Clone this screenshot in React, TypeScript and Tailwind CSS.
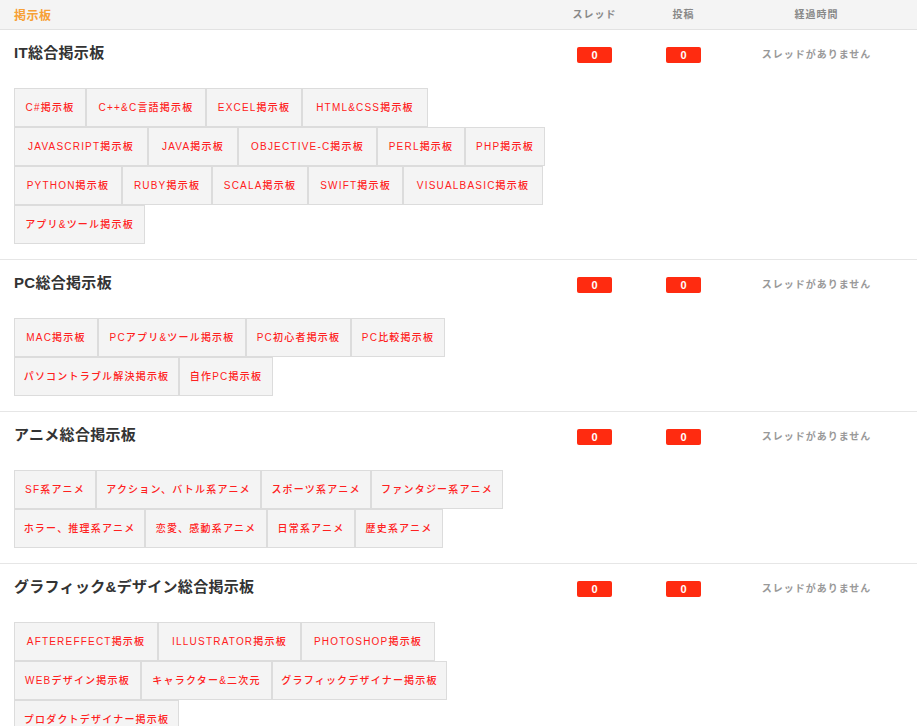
import React from 'react';

interface Tag {
  label: string;
  w: string;
}

interface Board {
  title: string;
  threads: number;
  posts: number;
  tags: Tag[];
}

const BOARDS: Board[] = [
  {
    title: 'IT総合掲示板',
    threads: 0,
    posts: 0,
    tags: [
      { label: 'C#掲示板', w: 'w-[72px]' },
      { label: 'C++&C言語掲示板', w: 'w-[120px]' },
      { label: 'EXCEL掲示板', w: 'w-[96px]' },
      { label: 'HTML&CSS掲示板', w: 'w-[126px]' },
      { label: 'JAVASCRIPT掲示板', w: 'w-[134px]' },
      { label: 'JAVA掲示板', w: 'w-[90px]' },
      { label: 'OBJECTIVE-C掲示板', w: 'w-[139px]' },
      { label: 'PERL掲示板', w: 'w-[88px]' },
      { label: 'PHP掲示板', w: 'w-[80px]' },
      { label: 'PYTHON掲示板', w: 'w-[108px]' },
      { label: 'RUBY掲示板', w: 'w-[90px]' },
      { label: 'SCALA掲示板', w: 'w-[96px]' },
      { label: 'SWIFT掲示板', w: 'w-[95px]' },
      { label: 'VISUALBASIC掲示板', w: 'w-[140px]' },
      { label: 'アプリ&ツール掲示板', w: 'w-[131px]' },
    ],
  },
  {
    title: 'PC総合掲示板',
    threads: 0,
    posts: 0,
    tags: [
      { label: 'MAC掲示板', w: 'w-[84px]' },
      { label: 'PCアプリ&ツール掲示板', w: 'w-[148px]' },
      { label: 'PC初心者掲示板', w: 'w-[105px]' },
      { label: 'PC比較掲示板', w: 'w-[94px]' },
      { label: 'パソコントラブル解決掲示板', w: 'w-[165px]' },
      { label: '自作PC掲示板', w: 'w-[94px]' },
    ],
  },
  {
    title: 'アニメ総合掲示板',
    threads: 0,
    posts: 0,
    tags: [
      { label: 'SF系アニメ', w: 'w-[82px]' },
      { label: 'アクション、バトル系アニメ', w: 'w-[165px]' },
      { label: 'スポーツ系アニメ', w: 'w-[110px]' },
      { label: 'ファンタジー系アニメ', w: 'w-[132px]' },
      { label: 'ホラー、推理系アニメ', w: 'w-[131px]' },
      { label: '恋愛、感動系アニメ', w: 'w-[122px]' },
      { label: '日常系アニメ', w: 'w-[88px]' },
      { label: '歴史系アニメ', w: 'w-[88px]' },
    ],
  },
  {
    title: 'グラフィック&デザイン総合掲示板',
    threads: 0,
    posts: 0,
    tags: [
      { label: 'AFTEREFFECT掲示板', w: 'w-[144px]' },
      { label: 'ILLUSTRATOR掲示板', w: 'w-[143px]' },
      { label: 'PHOTOSHOP掲示板', w: 'w-[134px]' },
      { label: 'WEBデザイン掲示板', w: 'w-[127px]' },
      { label: 'キャラクター&二次元', w: 'w-[131px]' },
      { label: 'グラフィックデザイナー掲示板', w: 'w-[175px]' },
      { label: 'プロダクトデザイナー掲示板', w: 'w-[165px]' },
    ],
  },
];

const FONT = "font-['Liberation_Sans','Noto_Sans_CJK_JP',sans-serif]";

const CountBadge: React.FC<{ value: number }> = ({ value }) => (
  <span className="flex items-center justify-center w-[35px] h-4 rounded-[2px] bg-[#ff2b10] text-white text-[11px] font-bold leading-none">
    {value}
  </span>
);

const BoardSection: React.FC<{ board: Board }> = ({ board }) => (
  <section className="flex border-b border-[#e6e6e6]">
    <div className="w-[550px] pl-[14px] pt-[13px] pb-[15px]">
      <h2 className="text-[15px] leading-5 font-bold text-[#333] tracking-[0.3px]">{board.title}</h2>
      <div className="mt-[25px] flex flex-wrap w-[536px]">
        {board.tags.map(tag => (
          <a
            key={tag.label}
            href="#"
            className={`${tag.w} h-[39px] flex items-center justify-center border border-[#dcdcdc] bg-[#f4f4f4] text-[10px] font-medium tracking-[1.2px] text-[#ff2020] whitespace-nowrap`}
          >
            {tag.label}
          </a>
        ))}
      </div>
    </div>
    <div className="w-[89px] flex justify-center pt-[17px]">
      <CountBadge value={board.threads} />
    </div>
    <div className="w-[89px] flex justify-center pt-[17px]">
      <CountBadge value={board.posts} />
    </div>
    <div className="w-[177px] flex justify-center pt-[17px]">
      <span className="text-[10px] leading-4 font-semibold tracking-[1px] text-[#999]">
        スレッドがありません
      </span>
    </div>
  </section>
);

export default function App() {
  return (
    <div className={`${FONT} bg-white w-[917px] h-[726px] overflow-hidden`}>
      <header className="flex items-center h-[30px] bg-[#f4f4f4] border-b border-[#e2e2e2]">
        <div className="w-[550px] pl-[14px]">
          <span className="text-[12px] font-bold tracking-[0.5px] text-[#f7a035]">掲示板</span>
        </div>
        <div className="w-[89px] text-center text-[10px] font-semibold tracking-[1px] text-[#888]">スレッド</div>
        <div className="w-[89px] text-center text-[10px] font-semibold tracking-[1px] text-[#888]">投稿</div>
        <div className="w-[177px] text-center text-[10px] font-semibold tracking-[1px] text-[#888]">経過時間</div>
      </header>
      {BOARDS.map(board => (
        <BoardSection key={board.title} board={board} />
      ))}
    </div>
  );
}
